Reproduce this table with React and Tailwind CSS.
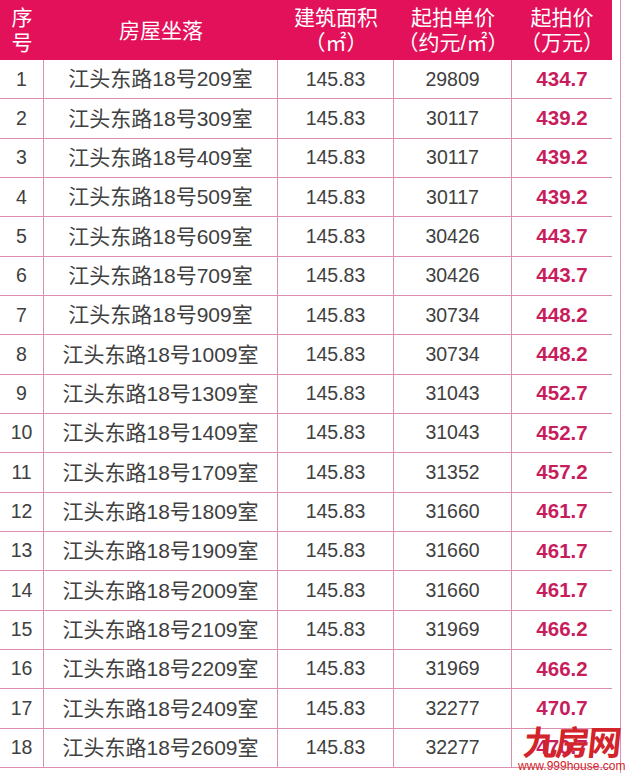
const rows = [
  ["1", "江头东路18号209室", "145.83", "29809", "434.7"],
  ["2", "江头东路18号309室", "145.83", "30117", "439.2"],
  ["3", "江头东路18号409室", "145.83", "30117", "439.2"],
  ["4", "江头东路18号509室", "145.83", "30117", "439.2"],
  ["5", "江头东路18号609室", "145.83", "30426", "443.7"],
  ["6", "江头东路18号709室", "145.83", "30426", "443.7"],
  ["7", "江头东路18号909室", "145.83", "30734", "448.2"],
  ["8", "江头东路18号1009室", "145.83", "30734", "448.2"],
  ["9", "江头东路18号1309室", "145.83", "31043", "452.7"],
  ["10", "江头东路18号1409室", "145.83", "31043", "452.7"],
  ["11", "江头东路18号1709室", "145.83", "31352", "457.2"],
  ["12", "江头东路18号1809室", "145.83", "31660", "461.7"],
  ["13", "江头东路18号1909室", "145.83", "31660", "461.7"],
  ["14", "江头东路18号2009室", "145.83", "31660", "461.7"],
  ["15", "江头东路18号2109室", "145.83", "31969", "466.2"],
  ["16", "江头东路18号2209室", "145.83", "31969", "466.2"],
  ["17", "江头东路18号2409室", "145.83", "32277", "470.7"],
  ["18", "江头东路18号2609室", "145.83", "32277", "470.7"],
];

const font = { fontFamily: '"Liberation Sans", "Noto Sans CJK SC", sans-serif' };

export default function App() {
  return (
    <div className="relative w-[625px] h-[773px] bg-white overflow-hidden" style={font}>
      <div className="flex">
        <div className="w-[612px]">
          {/* header */}
          <div className="grid grid-cols-[44px_234px_116px_118px_100px] h-[60px] bg-[#e2115a] text-white text-[21px] leading-[25px]">
            <div className="flex flex-col items-center justify-center">
              <span>序</span>
              <span>号</span>
            </div>
            <div className="flex items-center justify-center">房屋坐落</div>
            <div className="flex flex-col items-center justify-center">
              <span>建筑面积</span>
              <span>（㎡）</span>
            </div>
            <div className="flex flex-col items-center justify-center">
              <span>起拍单价</span>
              <span>（约元/㎡）</span>
            </div>
            <div className="flex flex-col items-center justify-center">
              <span>起拍价</span>
              <span>（万元）</span>
            </div>
          </div>
          {/* body */}
          {rows.map((r) => (
            <div
              key={r[0]}
              className="grid grid-cols-[44px_234px_116px_118px_100px] h-[39.33px] border-b border-[#dc8fb1] text-[19.5px] text-[#404040]"
            >
              <div className="flex items-center justify-center border-r border-[#dc8fb1]">{r[0]}</div>
              <div className="flex items-center justify-center border-r border-[#dc8fb1] text-[21px]">{r[1]}</div>
              <div className="flex items-center justify-center border-r border-[#dc8fb1]">{r[2]}</div>
              <div className="flex items-center justify-center border-r border-[#dc8fb1]">{r[3]}</div>
              <div className="flex items-center justify-center font-bold text-[20.5px] text-[#c81d5c]">{r[4]}</div>
            </div>
          ))}
        </div>
        <div className="ml-[8px] w-px h-[773px] bg-[#dc8fb1]" />
      </div>

      {/* watermark */}
      <div className="absolute left-[518px] top-[724px] flex flex-col items-center">
        <span
          className="text-[34px] leading-[34px] font-bold text-[#d3232b] tracking-[-2px] -skew-x-6"
          style={{ fontFamily: '"Noto Sans CJK SC", sans-serif' }}
        >
          九房网
        </span>
        <span className="text-[12px] leading-[14px] text-[#d3232b] mt-[1px]">www.999house.com</span>
      </div>
    </div>
  );
}
